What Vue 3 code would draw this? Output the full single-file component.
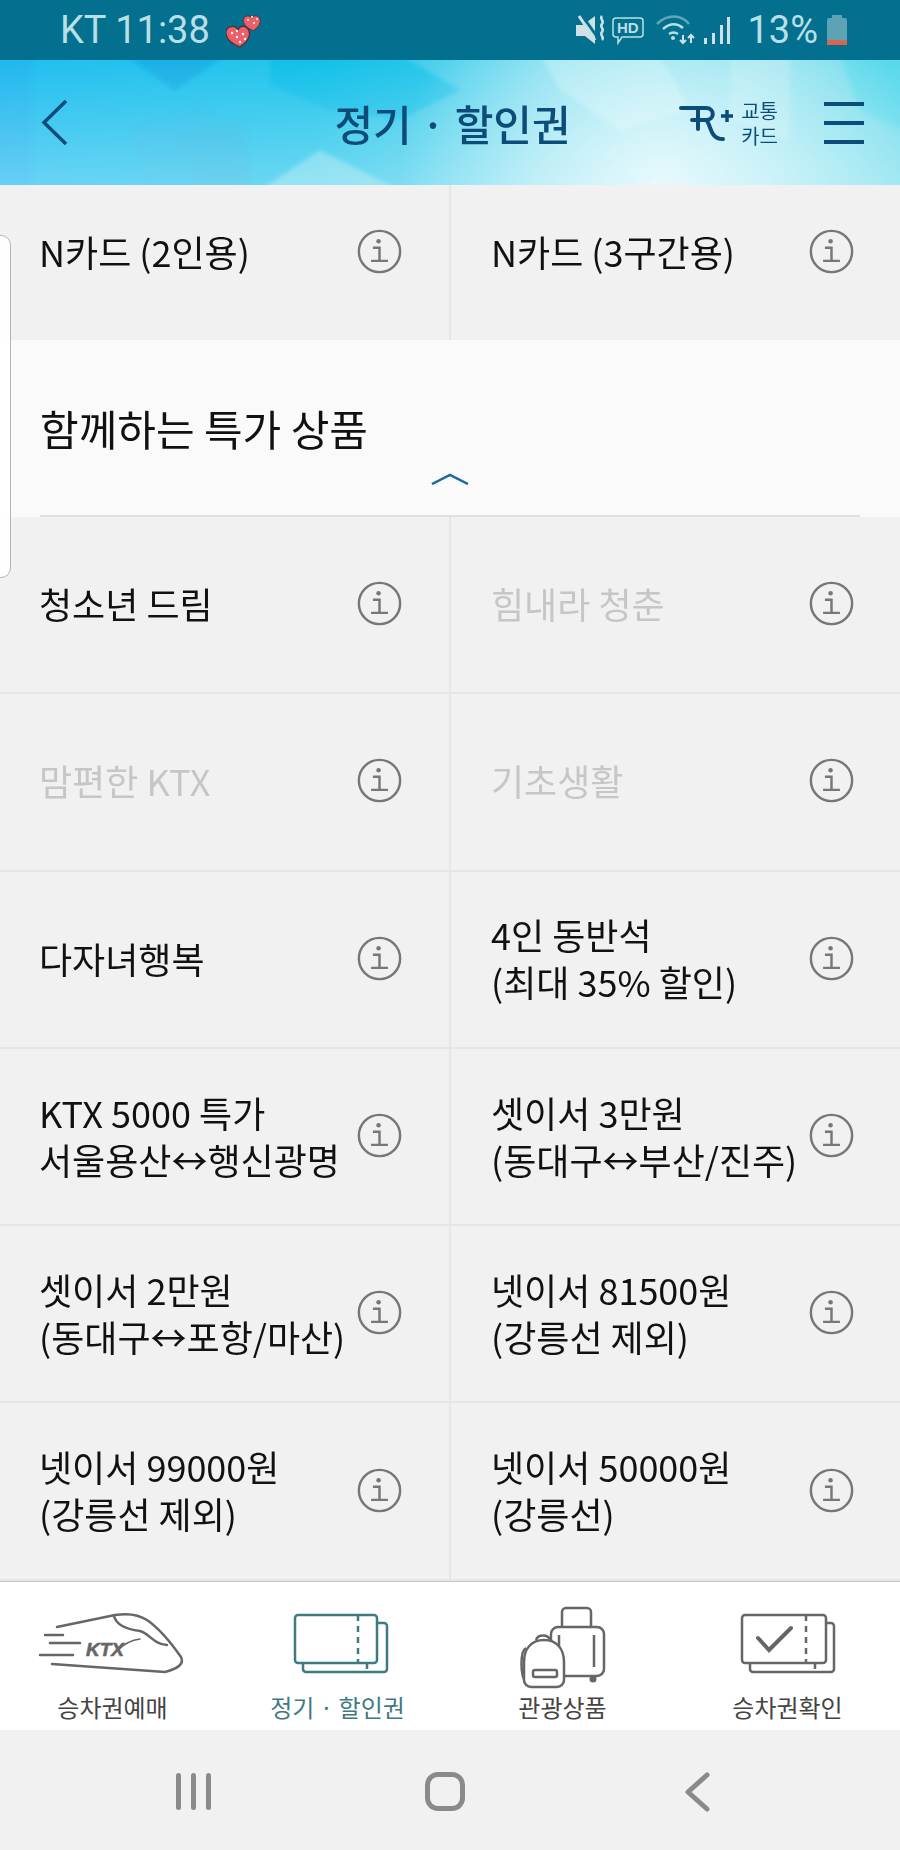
<template>
  <div class="phone">
    <!-- status bar -->
    <div class="status">
      <div class="status-left">
        <span>KT 11:38</span>
        <svg class="hearts" width="36" height="36" viewBox="0 0 36 36">
          <g stroke="#4a2a35" stroke-width="1.200">
            <path d="M0-5C-3-11-13-9-12-1-11 6-3 10 2 12 8 8 13 2 11-4 9-10 2-10 0-5z" fill="#ef5f68" transform="translate(12 23)" />
            <path d="M0-5C-3-11-13-9-12-1-11 6-3 10 2 12 8 8 13 2 11-4 9-10 2-10 0-5z" fill="#ef5f68" transform="translate(26 10) scale(.72)" />
          </g>
          <g fill="#fff">
            <circle cx="6" cy="21" r="1.200" /><circle cx="11" cy="25" r="1.200" /><circle cx="17" cy="22" r="1.200" />
            <circle cx="11" cy="19" r="1.200" /><circle cx="14" cy="30" r="1.200" /><circle cx="19" cy="27" r="1.200" />
            <circle cx="22" cy="8" r="1" /><circle cx="28" cy="11" r="1" /><circle cx="31" cy="7" r="1" /><circle cx="26" cy="5" r="1" />
          </g>
        </svg>
      </div>
      <div class="status-right">
        <svg width="156" height="60" viewBox="578 0 156 60">
          <path d="M578 25h7l12-9v28l-10-8h-9z" fill="#cfe0e6" />
          <path d="M583 14 600 38" stroke="#04708f" stroke-width="3" fill="none" />
          <path d="M581 16 597 40" stroke="#cfe0e6" stroke-width="3" fill="none" />
          <path d="M604 16c-3 3 3 5 0 8s3 5 0 8 3 5 0 8" fill="none" stroke="#cfe0e6" stroke-width="2.500" />
          <path d="M618 18h24a3 3 0 0 1 3 3v13a3 3 0 0 1-3 3h-18l-4 6v-6h-2a3 3 0 0 1-3-3v-13a3 3 0 0 1 3-3z" fill="none" stroke="#b9dfe6" stroke-width="1.500" />
          <text x="619" y="33" class="hd">HD</text>
          <g fill="none" stroke="#b9dfe6" stroke-width="2.500">
            <path d="M659 24c10-10 24-10 32 0" opacity=".5" />
            <path d="M665 29c7-6 14-6 20-1" />
            <path d="M671 34c3-2 6-2 9 0" />
          </g>
          <circle cx="675" cy="38" r="2" fill="#b9dfe6" />
          <path d="M685 35v8M682 40l3 3 3-3M693 43v-8M690 38l3-3 3 3" fill="none" stroke="#cfe0e6" stroke-width="2" />
          <g fill="#cfe0e6">
            <rect x="706" y="38" width="3" height="6" />
            <rect x="714" y="33" width="3" height="11" />
            <rect x="722" y="25" width="3" height="19" />
            <rect x="729" y="17" width="3" height="27" />
          </g>
        </svg>
        <span class="pct">13%</span>
        <div class="battery"><i></i></div>
      </div>
    </div>

    <!-- header -->
    <header class="header">
      <svg class="mosaic" width="900" height="125" viewBox="0 0 900 125">
        <defs>
          <linearGradient id="hbg" x1="0" y1="0" x2="1" y2="0">
            <stop offset="0" stop-color="#22bff0" />
            <stop offset=".35" stop-color="#25c6ec" />
            <stop offset=".6" stop-color="#6cd9ee" />
            <stop offset=".85" stop-color="#82dfee" />
            <stop offset="1" stop-color="#70dcec" />
          </linearGradient>
          <linearGradient id="hfade" x1="0" y1="0" x2="0" y2="1">
            <stop offset="0" stop-color="#fff" stop-opacity="0" />
            <stop offset="1" stop-color="#fff" stop-opacity=".32" />
          </linearGradient>
          <radialGradient id="hglow" cx="660" cy="125" r="260" gradientUnits="userSpaceOnUse">
            <stop offset="0" stop-color="#fff" stop-opacity=".75" />
            <stop offset="1" stop-color="#fff" stop-opacity="0" />
          </radialGradient>
          <filter id="soft"><feGaussianBlur stdDeviation="2" /></filter>
        </defs>
        <rect width="900" height="125" fill="url(#hbg)" />
        <g filter="url(#soft)">
          <polygon points="125,-5 225,-5 175,30" fill="#0e9fe0" opacity=".5" />
          <polygon points="-5,-5 32,-5 32,130 -5,130" fill="#2a9cee" opacity=".18" />
          <polygon points="270,-5 400,-5 460,30 400,60 330,50 270,25" fill="#05bbe8" opacity=".45" />
          <polygon points="130,70 200,45 250,85 250,130 150,130" fill="#35b4e2" opacity=".18" />
          <polygon points="175,75 245,60 250,120 200,125" fill="#38b0dc" opacity=".2" />
          <polygon points="540,-5 660,-5 690,50 620,70 560,30" fill="#b8eef5" opacity=".45" />
          <polygon points="730,-5 790,-5 790,80 730,60" fill="#c5f0f5" opacity=".3" />
          <polygon points="840,-5 905,-5 905,70 860,50" fill="#40d6ec" opacity=".5" />
          <polygon points="260,130 320,90 400,130" fill="#a8e8f2" opacity=".5" />
        </g>
        <rect width="900" height="125" fill="url(#hfade)" />
        <rect width="900" height="125" fill="url(#hglow)" />
      </svg>
      <div class="head-left">
        <svg width="27" height="47" viewBox="0 0 27 47"><path d="M25 2 3 23.500 25 45" fill="none" stroke="#0d4c78" stroke-width="3.500" /></svg>
      </div>
      <h1 class="title">정기 · 할인권</h1>
      <div class="head-right">
        <svg class="rail-mark" width="56" height="40" viewBox="0 0 56 40">
          <g fill="none" stroke="#0d4c78" stroke-width="4" stroke-linecap="round">
            <path d="M2 5H27C36 5 36 17 27 17H13" />
            <path d="M19 5V26" />
            <path d="M27 17C32 20 30 36 44 36" />
            <path d="M42 13H54M48 7V19" stroke-width="3.500" stroke-linecap="butt" />
          </g>
        </svg>
        <div class="rail-text">교통<br />카드</div>
        <div class="menu"><i></i><i></i><i></i></div>
      </div>
    </header>

    <!-- list -->
    <main class="list">
      <div class="grid cut">
        <div v-for="c in topCells" :key="c.t" class="cell">
          <span class="label">{{ c.t }}</span>
          <svg class="info" width="45" height="45" viewBox="0 0 48 48">
            <circle cx="24" cy="24" r="22" fill="none" stroke="#777" stroke-width="2.600" />
            <circle cx="23" cy="13" r="2.400" fill="#777" />
            <path d="M17 20h7v14M15 34h18" fill="none" stroke="#777" stroke-width="2.600" />
          </svg>
        </div>
      </div>

      <section class="section">
        <h2>함께하는 특가 상품</h2>
        <svg class="up" width="38" height="12" viewBox="0 0 38 12"><path d="M1 11 19 2l18 9" fill="none" stroke="#1a6a9a" stroke-width="2.500" /></svg>
        <div class="rule"></div>
      </section>

      <div class="grid">
        <div v-for="c in cells" :key="c.t" class="cell" :class="{ off: c.off }">
          <span class="label">{{ c.t }}</span>
          <svg class="info" width="45" height="45" viewBox="0 0 48 48">
            <circle cx="24" cy="24" r="22" fill="none" stroke="#777" stroke-width="2.600" />
            <circle cx="23" cy="13" r="2.400" fill="#777" />
            <path d="M17 20h7v14M15 34h18" fill="none" stroke="#777" stroke-width="2.600" />
          </svg>
        </div>
      </div>

      <div class="scroll-thumb"></div>
    </main>

    <!-- bottom tabs -->
    <nav class="tabs">
      <div class="tab">
        <svg width="225" height="90" viewBox="0 0 225 90">
          <g fill="none" stroke="#666" stroke-width="2.500" stroke-linecap="round">
            <path d="M57 27 115 15C128 13 138 14 147 20 160 29 174 47 181 57 184 63 180 68 165 72L52 64" />
            <path d="M114 16C116 24 124 29 140 31 149 33 153 44 167 45" />
            <path d="M45 35H63M50 43H80M40 55H73" />
            <path d="M118 50C125 43 132 40 140 39" stroke-width="1.500" />
          </g>
          <text x="86" y="56" class="ktx">KTX</text>
        </svg>
        <span>승차권예매</span>
      </div>
      <div class="tab active">
        <svg width="225" height="90" viewBox="0 0 225 90">
          <g fill="none" stroke="#3f7a80" stroke-width="2.500">
            <rect x="70" y="15" width="82" height="48" rx="3" />
            <path d="M152 23h7a3 3 0 0 1 3 3v43a3 3 0 0 1-3 3H81a3 3 0 0 1-3-3v-6" />
            <path d="M133 15v48M142 63v9" stroke-dasharray="6 5" />
          </g>
        </svg>
        <span>정기 · 할인권</span>
      </div>
      <div class="tab">
        <svg width="225" height="90" viewBox="0 0 225 90">
          <g fill="none" stroke="#666" stroke-width="2.500">
            <path d="M112 27V12a4 4 0 0 1 4-4h21a4 4 0 0 1 4 4v15" />
            <rect x="101" y="27" width="53" height="49" rx="7" />
            <path d="M144 35v32M109 35v12" />
            <path d="M76 48c-6 3-6 28 0 34" />
            <path d="M86 40c2-6 12-6 14 0" />
            <path d="M74 62c0-14 8-22 20-22s20 8 20 22v18a7 7 0 0 1-7 7H81a7 7 0 0 1-7-7z" fill="#fff" />
            <rect x="83" y="70" width="24" height="7" rx="2" />
          </g>
          <circle cx="143" cy="79" r="3.500" fill="#666" />
        </svg>
        <span>관광상품</span>
      </div>
      <div class="tab">
        <svg width="225" height="90" viewBox="0 0 225 90">
          <g fill="none" stroke="#666" stroke-width="2.500">
            <rect x="67" y="15" width="84" height="48" rx="3" />
            <path d="M151 23h5a3 3 0 0 1 3 3v43a3 3 0 0 1-3 3H78a3 3 0 0 1-3-3v-6" />
            <path d="M131 15v48M140 63v9" stroke-dasharray="6 5" />
            <path d="M83 38 94 50l22-22" stroke-width="4" stroke-linecap="round" />
          </g>
        </svg>
        <span>승차권확인</span>
      </div>
    </nav>

    <!-- android nav -->
    <div class="sysnav">
      <div class="bars"><i></i><i></i><i></i></div>
      <div class="home"></div>
      <svg width="26" height="40" viewBox="0 0 26 40"><path d="M23 3 4 20l19 17" fill="none" stroke="#8a8a8a" stroke-width="5" stroke-linecap="round" stroke-linejoin="round" /></svg>
    </div>
  </div>
</template>

<script setup>
const topCells = [{ t: "N카드 (2인용)" }, { t: "N카드 (3구간용)" }];

const cells = [
  { t: "청소년 드림" },
  { t: "힘내라 청춘", off: true },
  { t: "맘편한 KTX", off: true },
  { t: "기초생활", off: true },
  { t: "다자녀행복" },
  { t: "4인 동반석\n(최대 35% 할인)" },
  { t: "KTX 5000 특가\n서울용산↔행신광명" },
  { t: "셋이서 3만원\n(동대구↔부산/진주)" },
  { t: "셋이서 2만원\n(동대구↔포항/마산)" },
  { t: "넷이서 81500원\n(강릉선 제외)" },
  { t: "넷이서 99000원\n(강릉선 제외)" },
  { t: "넷이서 50000원\n(강릉선)" },
];
</script>

<style>
body {
  margin: 0;
}
</style>

<style scoped>
.phone {
  width: 900px;
  height: 1850px;
  display: flex;
  flex-direction: column;
  overflow: hidden;
  background: #f1f1f1;
  font-family: "Noto Sans CJK KR", "Noto Sans", sans-serif;
}

.status {
  height: 60px;
  flex: none;
  background: #04708f;
  color: #b9dfe6;
  display: flex;
  align-items: center;
  justify-content: space-between;
  padding: 0 53px 0 60px;
  font-family: Roboto, "Noto Sans", sans-serif;
  font-size: 38px;
}
.status-left {
  display: flex;
  align-items: center;
  gap: 16px;
}
.status-right {
  display: flex;
  align-items: center;
}
.hd {
  font-family: "Liberation Sans", sans-serif;
  font-size: 15px;
  font-weight: 700;
  fill: #b9dfe6;
}
.pct {
  margin: 0 9px 0 15px;
}
.battery {
  width: 20px;
  height: 27px;
  margin-top: 3px;
  background: #5ca3b6;
  border-radius: 2px;
  position: relative;
  display: flex;
  align-items: flex-end;
}
.battery::before {
  content: "";
  position: absolute;
  top: -3px;
  left: 5px;
  width: 10px;
  height: 3px;
  background: #5ca3b6;
}
.battery i {
  display: block;
  width: 100%;
  height: 5px;
  background: #d9674f;
}

.header {
  height: 125px;
  flex: none;
  position: relative;
  display: grid;
  grid-template-columns: 1fr auto 1fr;
  align-items: center;
  padding: 0 36px 0 41px;
  overflow: hidden;
}
.mosaic {
  position: absolute;
  left: 0;
  top: 0;
}
.head-left,
.head-right,
.title {
  position: relative;
}
.head-left {
  display: flex;
  align-items: center;
}
.title {
  margin: 0;
  font-size: 42px;
  font-weight: 500;
  color: #0d4c78;
  line-height: 1;
}
.head-right {
  display: flex;
  align-items: center;
  justify-content: flex-end;
}
.rail-text {
  font-size: 20px;
  line-height: 25px;
  color: #0d4c78;
  margin-left: 6px;
}
.menu {
  margin-left: 46px;
  display: flex;
  flex-direction: column;
  gap: 15px;
}
.menu i {
  display: block;
  width: 40px;
  height: 4px;
  background: #0d4c78;
}

.list {
  flex: 1;
  position: relative;
  border-bottom: 2px solid #c4c4c4;
  min-height: 0;
}
.grid {
  display: grid;
  grid-template-columns: 451px 449px;
  grid-auto-rows: 177.3px;
}
.grid.cut {
  grid-auto-rows: 155px;
}
.cell {
  display: flex;
  align-items: center;
  justify-content: space-between;
  padding: 0 47px 2px 39px;
  border-bottom: 2px solid #e6e6e6;
  box-sizing: border-box;
  color: #111;
}
.cell:nth-child(odd) {
  border-right: 2px solid #e6e6e6;
}
.cell:nth-child(even) {
  padding-left: 40px;
  padding-right: 46px;
}
.cell.off .label {
  color: #c6c6c6;
}
.grid.cut .cell {
  padding-bottom: 22px;
  border-bottom: 0;
}
.grid:last-of-type .cell:nth-last-child(-n + 2) {
  border-bottom: 0;
}
.label {
  font-size: 36px;
  line-height: 47px;
  white-space: pre-line;
}
.info {
  flex: none;
}

.section {
  height: 177px;
  box-sizing: border-box;
  background: #fafafa;
  padding: 63px 40px 0;
  display: flex;
  flex-direction: column;
}
.section h2 {
  margin: 0;
  font-size: 42px;
  font-weight: 400;
  line-height: 50px;
  color: #111;
}
.up {
  align-self: center;
  margin-top: 20px;
}
.rule {
  margin-top: 30px;
  height: 2px;
  background: #e0e0e0;
}

.scroll-thumb {
  position: absolute;
  left: -2px;
  top: 50px;
  width: 13px;
  height: 343px;
  box-sizing: border-box;
  background: rgba(255, 255, 255, 0.9);
  border: 1.5px solid #b5b5b5;
  border-radius: 0 10px 10px 0;
}

.tabs {
  height: 148px;
  flex: none;
  background: #fff;
  display: grid;
  grid-template-columns: repeat(4, 225px);
}
.tab {
  display: flex;
  flex-direction: column;
  align-items: center;
  font-size: 24px;
  line-height: 30px;
  color: #444;
}
.tab svg {
  margin-top: 18px;
  margin-bottom: 2px;
}
.tab.active {
  color: #3f7a80;
}
.ktx {
  font-family: "Liberation Sans", sans-serif;
  font-size: 19px;
  font-weight: 700;
  font-style: italic;
  fill: #666;
  stroke: #666;
  stroke-width: 0.6;
}

.sysnav {
  height: 120px;
  flex: none;
  background: #f1f1f1;
  display: grid;
  grid-template-columns: 1fr 1fr 1fr;
  justify-items: center;
  align-items: center;
  padding: 3px 77px 0 67px;
  box-sizing: border-box;
}
.bars {
  display: flex;
  gap: 10px;
}
.bars i {
  display: block;
  width: 5px;
  height: 37px;
  background: #8a8a8a;
  border-radius: 3px;
}
.home {
  width: 40px;
  height: 39px;
  box-sizing: border-box;
  border: 5px solid #8a8a8a;
  border-radius: 13px;
}
</style>
